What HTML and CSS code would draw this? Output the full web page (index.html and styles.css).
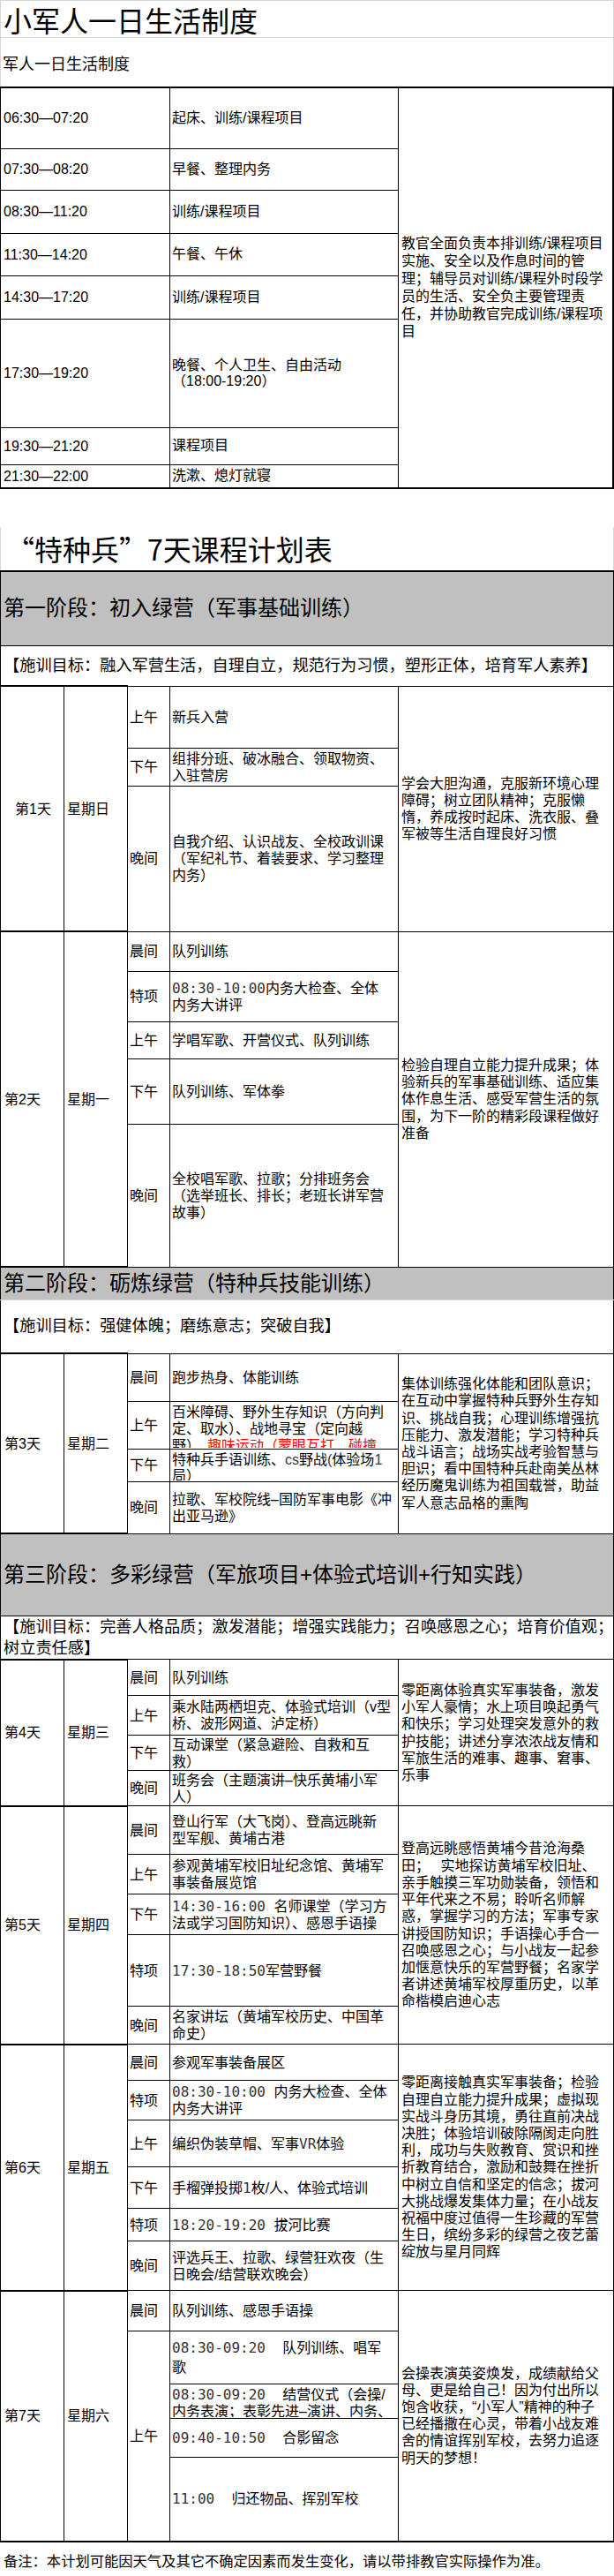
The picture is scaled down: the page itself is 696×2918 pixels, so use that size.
FILE: index.html
```html
<!DOCTYPE html>
<html lang="zh-CN">
<head>
<meta charset="utf-8">
<title>小军人一日生活制度</title>
<link rel="stylesheet" href="styles.css">
</head>
<body>
<div class="sheet">
  <div class="title-main">小军人一日生活制度</div>
  <div class="subtitle">军人一日生活制度</div>

  <table class="daily">
    <colgroup><col class="c-time"><col class="c-act"><col class="c-note"></colgroup>
    <tr class="r69"><td class="tc">06:30—07:20</td><td class="ac">起床、训练/课程项目</td>
      <td class="note-cell" rowspan="8">教官全面负责本排训练/课程项目<br>实施、安全以及作息时间的管<br>理；辅导员对训练/课程外时段学<br>员的生活、安全负主要管理责<br>任，并协助教官完成训练/课程项<br>目</td></tr>
    <tr class="r47"><td class="tc">07:30—08:20</td><td class="ac">早餐、整理内务</td></tr>
    <tr class="r49"><td class="tc">08:30—11:20</td><td class="ac">训练/课程项目</td></tr>
    <tr class="r48"><td class="tc">11:30—14:20</td><td class="ac">午餐、午休</td></tr>
    <tr class="r49"><td class="tc">14:30—17:20</td><td class="ac">训练/课程项目</td></tr>
    <tr class="r123"><td class="tc">17:30—19:20</td><td class="ac">晚餐、个人卫生、自由活动<br>（18:00-19:20）</td></tr>
    <tr class="r42"><td class="tc">19:30—21:20</td><td class="ac">课程项目</td></tr>
    <tr class="r27"><td class="tc">21:30—22:00</td><td class="ac">洗漱、熄灯就寝</td></tr>
  </table>

  <div class="title-plan"><span class="fw">“</span>特种兵<span class="fw">”</span>7天课程计划表</div>

  <table class="plan">
    <colgroup><col class="c-day"><col class="c-week"><col class="c-per"><col class="c-con"><col class="c-goal"></colgroup>

    <tr class="r84"><td class="band first" colspan="5">第一阶段：初入绿营（军事基础训练）</td></tr>
    <tr class="r46"><td class="aim" colspan="5">【施训目标：融入军营生活，自理自立，规范行为习惯，塑形正体，培育军人素养】</td></tr>

    <tr class="r70"><td class="day center" rowspan="3">第1天</td><td class="week" rowspan="3">星期日</td><td class="per">上午</td><td class="con">新兵入营</td>
      <td class="goal" rowspan="3">学会大胆沟通，克服新环境心理<br>障碍；树立团队精神；克服懒<br>惰，养成按时起床、洗衣服、叠<br>军被等生活自理良好习惯</td></tr>
    <tr class="r43"><td class="per">下午</td><td class="con">组排分班、破冰融合、领取物资、<br>入驻营房</td></tr>
    <tr class="r165"><td class="per">晚间</td><td class="con">自我介绍、认识战友、全校政训课<br>（军纪礼节、着装要求、学习整理<br>内务）</td></tr>

    <tr class="r45"><td class="day" rowspan="5">第2天</td><td class="week" rowspan="5">星期一</td><td class="per">晨间</td><td class="con">队列训练</td>
      <td class="goal" rowspan="5">检验自理自立能力提升成果；体<br>验新兵的军事基础训练、适应集<br>体作息生活、感受军营生活的氛<br>围，为下一阶的精彩段课程做好<br>准备</td></tr>
    <tr class="r57"><td class="per">特项</td><td class="con"><span class="tm">08:30-10:00</span>内务大检查、全体<br>内务大讲评</td></tr>
    <tr class="r42"><td class="per">上午</td><td class="con">学唱军歌、开营仪式、队列训练</td></tr>
    <tr class="r74"><td class="per">下午</td><td class="con">队列训练、军体拳</td></tr>
    <tr class="r162"><td class="per">晚间</td><td class="con">全校唱军歌、拉歌；分排班务会<br>（选举班长、排长；老班长讲军营<br>故事）</td></tr>

    <tr class="r37"><td class="band band-2" colspan="5">第二阶段：砺炼绿营（特种兵技能训练）</td></tr>
    <tr class="r61"><td class="aim" colspan="5">【施训目标：强健体魄；磨练意志；突破自我】</td></tr>

    <tr class="r54"><td class="day" rowspan="4">第3天</td><td class="week" rowspan="4">星期二</td><td class="per">晨间</td><td class="con">跑步热身、体能训练</td>
      <td class="goal" rowspan="4">集体训练强化体能和团队意识；<br>在互动中掌握特种兵野外生存知<br>识、挑战自我；心理训练增强抗<br>压能力、激发潜能；学习特种兵<br>战斗语言；战场实战考验智慧与<br>胆识；看中国特种兵赴南美丛林<br>经历魔鬼训练为祖国载誉，助益<br>军人意志品格的熏陶</td></tr>
    <tr class="r54"><td class="per">上午</td><td class="con top"><div class="clip clip-a">百米障碍、野外生存知识（方向判<br>定、取水）、战地寻宝（定向越<br>野）、<span class="red">趣味运动（蒙眼互打、碰撞</span></div></td></tr>
    <tr class="r37"><td class="per">下午</td><td class="con top"><div class="clip clip-b">特种兵手语训练、<span class="lat">cs</span>野战<span class="lat">(</span>体验场<span class="lat">1</span><br>局）</div></td></tr>
    <tr class="r59"><td class="per">晚间</td><td class="con">拉歌、军校院线–国防军事电影《冲<br>出亚马逊》</td></tr>

    <tr class="r93"><td class="band" colspan="5">第三阶段：多彩绿营（军旅项目+体验式培训+行知实践）</td></tr>
    <tr class="r49"><td class="aim" colspan="5">【施训目标：完善人格品质；激发潜能；增强实践能力；召唤感恩之心；培育价值观；<br>树立责任感】</td></tr>

    <tr class="r41"><td class="day" rowspan="4">第4天</td><td class="week" rowspan="4">星期三</td><td class="per">晨间</td><td class="con">队列训练</td>
      <td class="goal" rowspan="4">零距离体验真实军事装备，激发<br>小军人豪情；水上项目唤起勇气<br>和快乐；学习处理突发意外的救<br>护技能；讲述分享浓浓战友情和<br>军旅生活的难事、趣事、窘事、<br>乐事</td></tr>
    <tr class="r45"><td class="per">上午</td><td class="con">乘水陆两栖坦克、体验式培训（v型<br>桥、波形网道、泸定桥）</td></tr>
    <tr class="r40"><td class="per">下午</td><td class="con">互动课堂（紧急避险、自救和互<br>救）</td></tr>
    <tr class="r40"><td class="per">晚间</td><td class="con">班务会（主题演讲–快乐黄埔小军<br>人）</td></tr>

    <tr class="r55"><td class="day" rowspan="5">第5天</td><td class="week" rowspan="5">星期四</td><td class="per">晨间</td><td class="con">登山行军（大飞岗）、登高远眺新<br>型军舰、黄埔古港</td>
      <td class="goal" rowspan="5">登高远眺感悟黄埔今昔沧海桑<br>田；　 实地探访黄埔军校旧址、<br>亲手触摸三军功勋装备，领悟和<br>平年代来之不易；聆听名师解<br>惑，掌握学习的方法；军事专家<br>讲授国防知识；手语操心手合一<br>召唤感恩之心；与小战友一起参<br>加惬意快乐的军营野餐；名家学<br>者讲述黄埔军校厚重历史，以革<br>命楷模启迪心志</td></tr>
    <tr class="r45"><td class="per">上午</td><td class="con">参观黄埔军校旧址纪念馆、黄埔军<br>事装备展览馆</td></tr>
    <tr class="r46"><td class="per">下午</td><td class="con"><span class="tm">14:30-16:00 </span>名师课堂（学习方<br>法或学习国防知识）、感恩手语操</td></tr>
    <tr class="r81"><td class="per">特项</td><td class="con"><span class="tm">17:30-18:50</span>军营野餐</td></tr>
    <tr class="r43"><td class="per">晚间</td><td class="con">名家讲坛（黄埔军校历史、中国革<br>命史）</td></tr>

    <tr class="r41"><td class="day" rowspan="6">第6天</td><td class="week" rowspan="6">星期五</td><td class="per">晨间</td><td class="con">参观军事装备展区</td>
      <td class="goal" rowspan="6">零距离接触真实军事装备；检验<br>自理自立能力提升成果；虚拟现<br>实战斗身历其境，勇往直前决战<br>决胜；体验培训破除隔阂走向胜<br>利，成功与失败教育、赏识和挫<br>折教育结合，激励和鼓舞在挫折<br>中树立自信和坚定的信念；拔河<br>大挑战爆发集体力量；在小战友<br>祝福中度过值得一生珍藏的军营<br>生日，缤纷多彩的绿营之夜艺蕾<br>绽放与星月同辉</td></tr>
    <tr class="r45"><td class="per">特项</td><td class="con"><span class="tm">08:30-10:00 </span>内务大检查、全体<br>内务大讲评</td></tr>
    <tr class="r53"><td class="per">上午</td><td class="con">编织伪装草帽、军事<span class="tm">VR</span>体验</td></tr>
    <tr class="r47"><td class="per">下午</td><td class="con">手榴弹投掷<span class="tm">1</span>枚/人、体验式培训</td></tr>
    <tr class="r37"><td class="per">特项</td><td class="con"><span class="tm">18:20-19:20 </span>拔河比赛</td></tr>
    <tr class="r56"><td class="per">晚间</td><td class="con">评选兵王、拉歌、绿营狂欢夜（生<br>日晚会/结营联欢晚会）</td></tr>

    <tr class="r46"><td class="day last" rowspan="5">第7天</td><td class="week last" rowspan="5">星期六</td><td class="per">晨间</td><td class="con">队列训练、感恩手语操</td>
      <td class="goal" rowspan="5">会操表演英姿焕发，成绩献给父<br>母、更是给自己！因为付出所以<br>饱含收获，“小军人”精神的种子<br>已经播撒在心灵，带着小战友难<br>舍的情谊挥别军校，去努力追逐<br>明天的梦想！</td></tr>
    <tr class="r60"><td class="per" rowspan="4">上午</td><td class="con wide"><span class="tm">08:30-09:20  </span>队列训练、唱军<br>歌</td></tr>
    <tr class="r39"><td class="con top"><div class="clip clip-c"><span class="tm">08:30-09:20  </span>结营仪式（会操/<br>内务表演；表彰先进–演讲、内务、</div></td></tr>
    <tr class="r44"><td class="con"><span class="tm">09:40-10:50  </span>合影留念</td></tr>
    <tr class="r95"><td class="con"><span class="tm">11:00  </span>归还物品、挥别军校</td></tr>
  </table>

  <p class="remark">备注：本计划可能因天气及其它不确定因素而发生变化，请以带排教官实际操作为准。</p>
</div>
</body>
</html>
```

FILE: styles.css
```css
* { box-sizing: border-box; }

html, body {
  margin: 0;
  padding: 0;
  background: #fff;
}

body {
  font-family: "Liberation Sans", "Noto Sans CJK SC", sans-serif;
  font-size: 16px;
  color: #000;
}

.sheet { width: 696px; }

.title-main {
  height: 43px;
  border: 1px solid #d6d6d6;
  padding: 2px 0 0 3px;
  font-family: "Noto Sans CJK SC", sans-serif;
  font-size: 32px;
  line-height: 38px;
  white-space: nowrap;
}

.subtitle {
  height: 55px;
  border-left: 1px solid #d6d6d6;
  border-right: 1px solid #d6d6d6;
  padding: 20px 0 0 2px;
  font-size: 18px;
  line-height: 20px;
  white-space: nowrap;
}

table {
  border-collapse: collapse;
  table-layout: fixed;
  width: 696px;
}

td {
  border: 1px solid #000;
  padding: 0 2px;
  vertical-align: middle;
  line-height: 19px;
  white-space: nowrap;
  overflow: hidden;
}

/* daily schedule */
.daily {
  border-top: 2px solid #000;
  border-bottom: 2px solid #000;
  border-right: 2px solid #000;
}
.c-time { width: 192px; }
.c-act { width: 259px; }
.tc { padding-left: 3px; }
.ac { padding-left: 2px; line-height: 18px; }
.note-cell { padding-left: 3px; line-height: 20px; }

/* plan title */
.title-plan {
  margin-top: 43px;
  height: 49px;
  border-left: 1px solid #d6d6d6;
  border-right: 1px solid #d6d6d6;
  padding: 4px 0 0 6px;
  font-family: "Noto Sans CJK SC", sans-serif;
  font-size: 32px;
  line-height: 40px;
  white-space: nowrap;
}
.fw { font-feature-settings: "fwid" 1; }

/* plan table */
.plan { border-bottom: 2px solid #000; }
.c-day { width: 72px; }
.c-week { width: 72px; }
.c-per { width: 48px; }
.c-con { width: 259px; }

.band {
  background: #c0c0c0;
  font-size: 24px;
  line-height: 30px;
  padding-left: 3px;
}
.band.first { border-top: 2px solid #000; }
.band-2 { border-bottom-color: #d6d6d6; }

.aim {
  font-size: 18.2px;
  line-height: 24px;
  padding-left: 3px;
}

.day,
.week {
  border-top: 2px solid #000;
  border-bottom: 2px solid #000;
}
.day { padding-left: 4px; }
.week { padding-left: 3px; }
.center { text-align: center; }

.per { padding-left: 2px; }
.con { padding-left: 2px; }
.con.wide { line-height: 22px; }
.goal { padding-left: 3px; line-height: 19.2px; }

.top { vertical-align: top; }
.clip { overflow: hidden; }
.clip-a { height: 52px; padding-top: 2px; }
.clip-b { height: 35px; padding-top: 3px; line-height: 18px; }
.clip-c { height: 37px; padding-top: 2px; }

.tm {
  font-family: "DejaVu Sans Mono", "Liberation Mono", monospace;
  color: #333;
  white-space: pre;
}
.lat { color: #2f3b52; }
.red { color: #f00; }

/* row heights */
.r27 { height: 27px; }
.r37 { height: 37px; }
.r39 { height: 39px; }
.r40 { height: 40px; }
.r41 { height: 41px; }
.r42 { height: 42px; }
.r43 { height: 43px; }
.r44 { height: 44px; }
.r45 { height: 45px; }
.r46 { height: 46px; }
.r47 { height: 47px; }
.r48 { height: 48px; }
.r49 { height: 49px; }
.r53 { height: 53px; }
.r54 { height: 54px; }
.r55 { height: 55px; }
.r56 { height: 56px; }
.r57 { height: 57px; }
.r59 { height: 59px; }
.r60 { height: 60px; }
.r61 { height: 61px; }
.r69 { height: 69px; }
.r70 { height: 70px; }
.r74 { height: 74px; }
.r81 { height: 81px; }
.r84 { height: 84px; }
.r93 { height: 93px; }
.r95 { height: 95px; }
.r123 { height: 123px; }
.r162 { height: 162px; }
.r165 { height: 165px; }

.remark {
  margin: 0;
  padding: 11px 0 0 4px;
  font-size: 16.3px;
  line-height: 20px;
  white-space: nowrap;
}
```
